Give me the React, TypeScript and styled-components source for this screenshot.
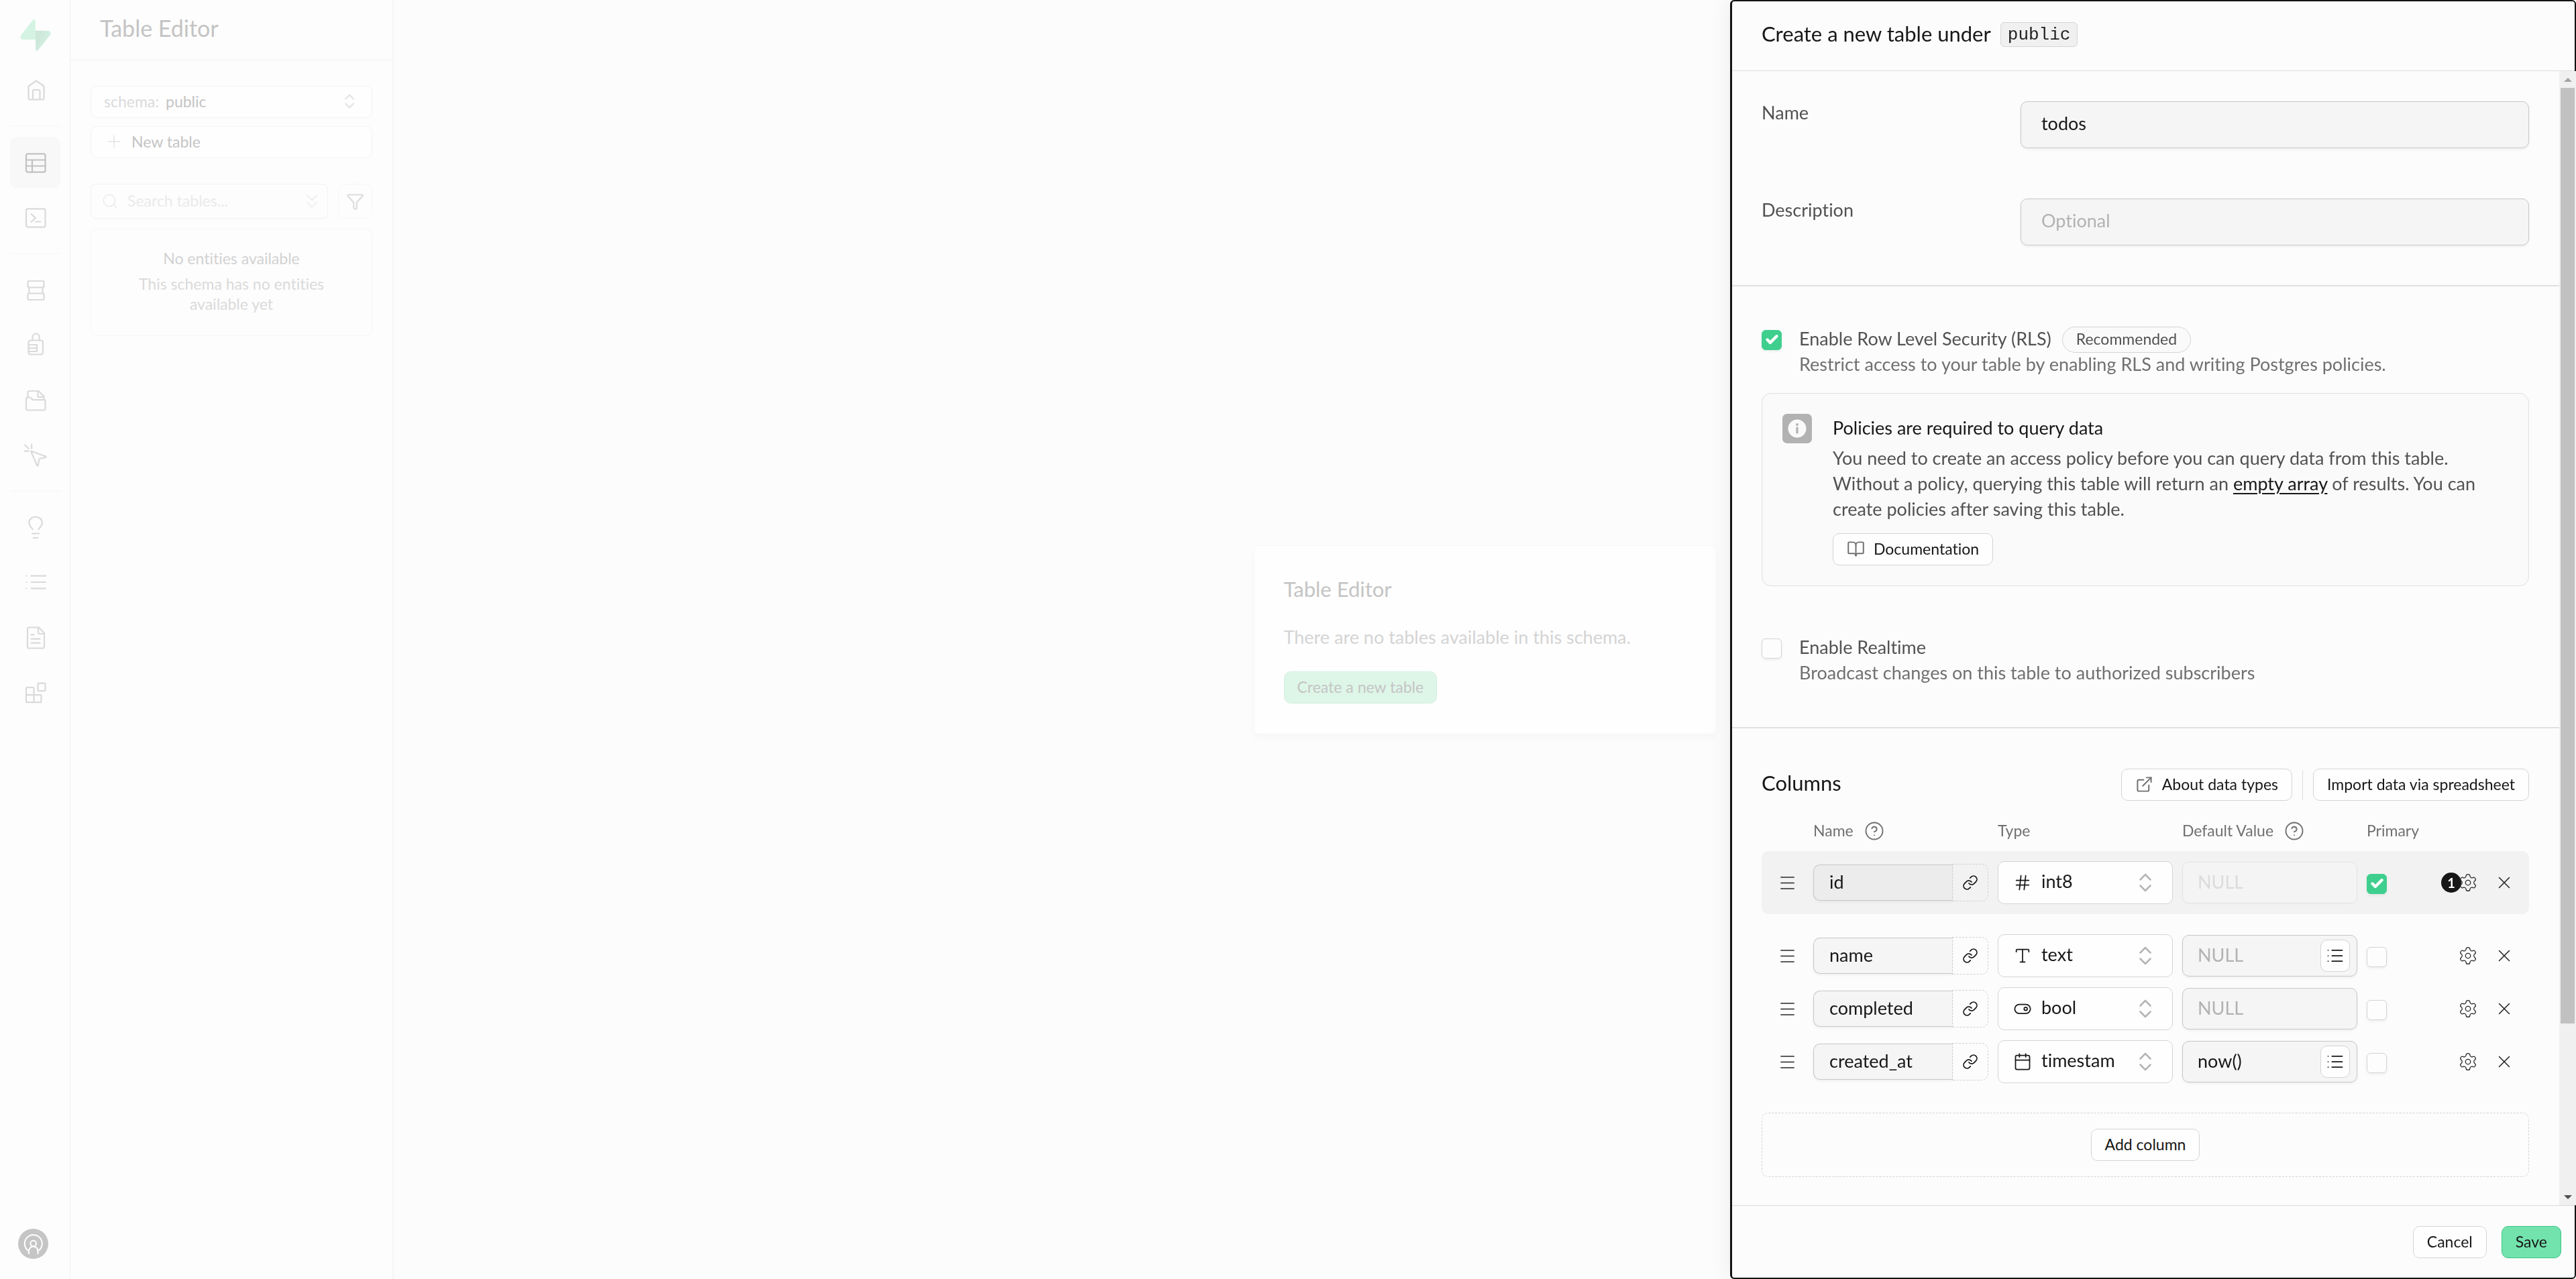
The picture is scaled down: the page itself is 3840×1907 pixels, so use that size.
import React, { useId } from 'react';
import styled, { createGlobalStyle } from 'styled-components';
import {
  BookOpen,
  Calendar,
  Check,
  ChevronsDown,
  ChevronsUpDown,
  CircleHelp,
  ExternalLink,
  Filter,
  Hash,
  Link,
  List,
  Menu,
  Plus,
  Search,
  Settings,
  Type,
  X,
} from 'lucide-react';

const GlobalStyle = createGlobalStyle`
  *, *::before, *::after { box-sizing: border-box; }
  body {
    margin: 0;
    background: #fdfdfd;
    color: #171717;
    font-family: Lato, 'Liberation Sans', sans-serif;
    font-size: 27px;
    line-height: 38px;
    font-variant-ligatures: none;
  }
  button, input, select { font: inherit; font-variant-ligatures: none; color: inherit; margin: 0; }
  h1, h2, h3, p { margin: 0; font-weight: 400; font-size: inherit; }
`;

/* ---------- shell ---------- */

const Shell = styled.div`
  display: flex;
  min-height: 100vh;
  color: #c4c4c4;
`;

const Rail = styled.aside`
  display: flex;
  flex-direction: column;
  flex: none;
  width: 105px;
  padding: 29px 14px 30px 15px;
  border-right: 1px solid #f1f1f1;
`;

const LogoLink = styled.a`
  display: flex;
  justify-content: center;
  margin-bottom: 20px;
`;

const RailNav = styled.nav`
  display: flex;
  flex-direction: column;
  flex: 1;
  gap: 5px;
`;

const RailLink = styled.a<{ $active?: boolean }>`
  display: grid;
  place-items: center;
  height: 77px;
  border-radius: 10px;
  color: ${(p) => (p.$active ? '#c2c2c2' : '#dadada')};
  background: ${(p) => (p.$active ? '#f8f8f8' : 'transparent')};
`;

const RailDivider = styled.hr`
  width: 100%;
  height: 2px;
  margin: 9px 0 10px;
  border: 0;
  background: #f9f9f9;
`;

const AvatarButton = styled.button`
  width: 45px;
  height: 45px;
  margin-left: 12px;
  padding: 0;
  border: 0;
  border-radius: 50%;
  background: #c5c5c5;
  color: #fff;
`;

const Sidebar = styled.section`
  flex: none;
  width: 482px;
  border-right: 2px solid #f5f5f5;
`;

const SidebarHeader = styled.header`
  display: flex;
  align-items: center;
  height: 90px;
  padding: 0 44px 6px;
  border-bottom: 1px solid #f3f3f3;
  font-size: 34px;
`;

const SidebarBody = styled.div`
  display: flex;
  flex-direction: column;
  padding: 38px 30px;
  font-size: 23px;
  line-height: 30px;
`;

const SidebarButton = styled.button`
  display: flex;
  align-items: center;
  height: 48px;
  margin-bottom: 12px;
  padding: 0 19px 2px;
  border: 1px solid #f3f3f3;
  border-radius: 10px;
  background: #fefefe;
  svg { color: #e4e4e4; }
`;

const SchemaLabel = styled.span`
  margin-right: 10px;
  color: #dadada;
`;

const Spread = styled.span`
  flex: 1;
  text-align: left;
`;

const NewTableText = styled.span`
  margin-left: 11px;
`;

const SearchRow = styled.div`
  display: flex;
  gap: 15px;
  margin: 26px 0 15px;
`;

const SearchBox = styled.label`
  display: flex;
  align-items: center;
  flex: 1;
  min-width: 0;
  gap: 13px;
  height: 52px;
  padding: 0 6px 0 15px;
  border: 1px solid #f1f1f1;
  border-radius: 7px;
  color: #e9e9e9;
`;

const SearchInput = styled.input`
  flex: 1;
  min-width: 0;
  padding: 0 0 3px;
  border: 0;
  outline: 0;
  background: transparent;
  &::placeholder { color: #eaeaea; opacity: 1; }
`;

const FilterButton = styled.button`
  display: grid;
  place-items: center;
  width: 51px;
  height: 52px;
  padding: 0;
  border: 1px dashed #f1f1f1;
  border-radius: 10px;
  background: transparent;
  color: #dadada;
`;

const EmptyBox = styled.div`
  display: flex;
  flex-direction: column;
  gap: 8px;
  padding: 28px 60px 32px;
  border: 1px solid #f6f6f6;
  border-radius: 10px;
  text-align: center;
  color: #dadada;
`;

const EmptyTitle = styled.p`
  color: #d2d2d2;
`;

const Main = styled.main`
  display: flex;
  flex: 1;
  align-items: center;
  justify-content: center;
  background: #fcfcfc;
`;

const Card = styled.article`
  display: flex;
  flex-direction: column;
  align-items: flex-start;
  width: 690px;
  padding: 45px 44px;
  border: 1px solid #f7f7f7;
  border-radius: 6px;
  background: #fefefe;
  box-shadow: 0 6px 12px rgba(0, 0, 0, 0.025);
`;

const CardTitle = styled.h2`
  margin-bottom: 34px;
  font-size: 31px;
`;

const CardText = styled.p`
  margin-bottom: 32px;
  color: #d4d4d4;
`;

const CardButton = styled.button`
  height: 48px;
  padding: 0 19px 2px;
  border: 1px solid #d3efe0;
  border-radius: 10px;
  background: #def6e8;
  font-size: 23px;
`;

/* ---------- drawer ---------- */

const Drawer = styled.form`
  position: fixed;
  inset: 0 0 0 auto;
  display: flex;
  flex-direction: column;
  width: 100%;
  max-width: 1261px;
  border: 2px solid #131313;
  border-left-width: 3px;
  border-radius: 6px;
  background: #fcfcfc;
  box-shadow: 0 0 36px rgba(0, 0, 0, 0.07);
  color: #525252;
`;

const DrawerHeader = styled.header`
  display: flex;
  align-items: center;
  flex: none;
  gap: 14px;
  height: 104px;
  padding: 0 44px 4px;
  border-bottom: 1px solid #dfdfdf;
`;

const DrawerTitle = styled.h1`
  padding-bottom: 3px;
  font-size: 31px;
  color: #171717;
`;

const SchemaCode = styled.code`
  height: 37px;
  padding: 0 10px;
  border: 1px solid #d6d6d6;
  border-radius: 6px;
  background: #f0f0f0;
  font: 26px/36px 'Liberation Mono', monospace;
  color: #222;
`;

const DrawerBody = styled.div`
  display: flex;
  flex: 1;
  min-height: 0;
  margin-right: -2px;
`;

const ScrollArea = styled.div`
  flex: 1;
  min-width: 0;
  overflow-y: auto;
  scrollbar-width: none;
`;

const ScrollTrack = styled.div`
  display: flex;
  flex-direction: column;
  align-items: center;
  flex: none;
  width: 25px;
  background: #f0f0f0;
`;

const ScrollArrow = styled.span<{ $down?: boolean }>`
  display: grid;
  place-items: center;
  flex: none;
  width: 25px;
  height: 25px;
  &::before {
    content: '';
    border: 6px solid transparent;
    border-top-width: ${(p) => (p.$down ? '6px' : '0')};
    border-bottom-width: ${(p) => (p.$down ? '0' : '6px')};
    border-top-color: #505050;
    border-bottom-color: #a3a3a3;
  }
`;

const ScrollRun = styled.div`
  flex: 1;
  width: 21px;
`;

const ScrollThumb = styled.div`
  height: 85%;
  background: #c1c1c1;
`;

const Section = styled.section<{ $ruled?: boolean }>`
  display: flex;
  flex-direction: column;
  padding: 60px 45px 64px 44px;
  border-bottom: ${(p) => (p.$ruled ? '2px solid #e0e0e0' : '0')};
`;

const FieldSection = styled(Section)`
  gap: 75px;
  padding-top: 45px;
  padding-bottom: 59px;
`;

const Field = styled.div`
  display: grid;
  grid-template-columns: 386px minmax(0, 1fr);
`;

const FieldLabel = styled.label`
  line-height: 34px;
`;

const TextInput = styled.input`
  width: 100%;
  height: 70px;
  padding: 0 30px 5px;
  border: 1px solid #c7c7c7;
  border-radius: 10px;
  outline: 0;
  background: #f5f5f5;
  box-shadow: 0 2px 4px rgba(0, 0, 0, 0.05);
  color: #171717;
  &::placeholder { color: #b2b2b2; opacity: 1; }
`;

const OptionRow = styled.div`
  display: grid;
  grid-template-columns: 30px minmax(0, 1fr);
  column-gap: 26px;
`;

const OptionHead = styled.div`
  display: flex;
  align-items: center;
  gap: 16px;
  height: 39px;
`;

const OptionLabel = styled.label`
  padding-bottom: 3px;
`;

const OptionText = styled.p`
  grid-column: 2;
  line-height: 34px;
  color: #707070;
`;

const Badge = styled.span`
  height: 39px;
  padding: 0 20px;
  border: 1px solid #d4d4d4;
  border-radius: 20px;
  background: #fafafa;
  font-size: 23px;
  line-height: 35px;
`;

const CheckWrap = styled.span`
  display: grid;
  place-items: center;
  align-self: center;
  width: 30px;
  height: 30px;
  svg {
    grid-area: 1 / 1;
    color: #fff;
    pointer-events: none;
  }
`;

const CheckInput = styled.input`
  grid-area: 1 / 1;
  appearance: none;
  width: 30px;
  height: 30px;
  border: 1px solid #d4d4d4;
  border-radius: 6px;
  background: #fdfdfd;
  box-shadow: 0 2px 4px rgba(0, 0, 0, 0.06);
  &:checked {
    border-color: #3ecf8e;
    background: #3ecf8e;
  }
`;

const Alert = styled.div`
  display: grid;
  grid-template-columns: 44px minmax(0, 1fr);
  column-gap: 31px;
  margin: 26px 0 73px;
  padding: 30px;
  border: 1px solid #dfdfdf;
  border-radius: 14px;
  background: #fafafa;
`;

const AlertIcon = styled.span`
  display: grid;
  place-items: center;
  width: 44px;
  height: 44px;
  border-radius: 7px;
  background: #b2b2b2;
`;

const AlertTitle = styled.h3`
  margin: 2px 0 7px;
  color: #171717;
`;

const AlertText = styled.p`
  margin-bottom: 17px;
`;

const TextLink = styled.a`
  color: #171717;
  text-underline-offset: 4px;
`;

const Button = styled.button<{ $primary?: boolean }>`
  display: flex;
  align-items: center;
  gap: 13px;
  height: 48px;
  padding: 0 20px 2px;
  border: 1px solid ${(p) => (p.$primary ? '#3fc586' : '#d4d4d4')};
  border-radius: 10px;
  background: ${(p) => (p.$primary ? '#72e3ad' : '#fefefe')};
  font-size: 23px;
  color: #171717;
  svg { color: #707070; }
`;

const ColumnsHead = styled.div`
  display: flex;
  align-items: center;
  gap: 15px;
  margin-bottom: 25px;
`;

const ColumnsTitle = styled.h2`
  flex: 1;
  padding-bottom: 6px;
  font-size: 31px;
  color: #171717;
`;

const HeadDivider = styled.span`
  width: 1px;
  height: 45px;
  background: #dfdfdf;
`;

const ColumnTable = styled.table`
  display: block;
  margin-bottom: 44px;
`;

const TableHead = styled.thead`
  display: block;
  margin-bottom: 10px;
`;

const TableBody = styled.tbody`
  display: flex;
  flex-direction: column;
  gap: 15px;
`;

const TableRow = styled.tr<{ $primary?: boolean }>`
  display: grid;
  grid-template-columns: 63px repeat(3, minmax(0, 1fr)) 112px 116px;
  column-gap: 14px;
  align-items: center;
  margin-bottom: ${(p) => (p.$primary ? '15px' : '0')};
  padding: ${(p) => (p.$primary ? '15px 0' : '0')};
  border-radius: 10px;
  background: ${(p) => (p.$primary ? '#f2f2f2' : 'transparent')};
`;

const HeadCell = styled.th`
  display: flex;
  align-items: center;
  gap: 16px;
  height: 40px;
  padding: 0;
  font-size: 23px;
  font-weight: 400;
  color: #707070;
`;

const HeadText = styled.span`
  padding-bottom: 3px;
`;

const Cell = styled.td`
  display: flex;
  align-items: center;
  min-width: 0;
  padding: 0;
`;

const PrimaryCell = styled(Cell)`
  padding-top: 3px;
`;

const ActionsCell = styled(Cell)`
  justify-content: flex-end;
  gap: 28px;
  padding-right: 26px;
`;

const IconButton = styled.button`
  position: relative;
  display: grid;
  place-items: center;
  width: 26px;
  height: 30px;
  padding: 0;
  border: 0;
  background: transparent;
  color: #262626;
  svg { position: relative; }
`;

const DragHandle = styled(IconButton)`
  margin-left: 24px;
`;

const CountBadge = styled.span`
  position: absolute;
  left: -25px;
  top: 0;
  width: 30px;
  height: 30px;
  border-radius: 50%;
  background: #171717;
  font-size: 20px;
  font-weight: 700;
  line-height: 30px;
  color: #fff;
`;

const ColumnNameInput = styled.input<{ $tint?: boolean }>`
  flex: 1;
  min-width: 0;
  height: 54px;
  padding: 0 10px 4px 23px;
  border: 1px solid #c7c7c7;
  border-right: 0;
  border-radius: 10px 0 0 10px;
  outline: 0;
  background: ${(p) => (p.$tint ? '#ececec' : '#f5f5f5')};
  box-shadow: 0 2px 4px rgba(0, 0, 0, 0.05);
  color: #171717;
`;

const LinkButton = styled.button`
  display: grid;
  place-items: center;
  flex: none;
  width: 54px;
  height: 56px;
  padding: 0;
  border: 1px dashed #cfcfcf;
  border-radius: 0 10px 10px 0;
  background: transparent;
  color: #171717;
`;

const TypeBox = styled.span`
  display: grid;
  grid-template-columns: 28px minmax(0, 1fr) 36px;
  align-items: center;
  width: 100%;
  height: 64px;
  padding: 0 22px;
  border: 1px solid #d4d4d4;
  border-radius: 10px;
  background: #fefefe;
  color: #171717;
  svg { grid-area: 1 / 1; pointer-events: none; }
  svg:last-child { grid-area: 1 / 3; color: #b5b5b5; }
`;

const TypeSelect = styled.select`
  grid-area: 1 / 1 / 2 / -1;
  appearance: none;
  height: 62px;
  padding: 0 30px 4px 42px;
  border: 0;
  outline: 0;
  background: transparent;
`;

const DefaultBox = styled.span<{ $disabled?: boolean }>`
  display: flex;
  align-items: center;
  width: 100%;
  height: 62px;
  padding: 0 10px 0 0;
  border: 1px solid #c7c7c7;
  border-radius: 10px;
  background: ${(p) => (p.$disabled ? '#fafafa' : '#f5f5f5')};
  box-shadow: 0 2px 4px rgba(0, 0, 0, 0.05);
  opacity: ${(p) => (p.$disabled ? 0.35 : 1)};
`;

const DefaultInput = styled.input`
  flex: 1;
  min-width: 0;
  height: 60px;
  padding: 0 0 4px 22px;
  border: 0;
  outline: 0;
  background: transparent;
  color: #171717;
  &::placeholder { color: #b2b2b2; opacity: 1; }
`;

const ListButton = styled.button`
  display: grid;
  place-items: center;
  width: 44px;
  height: 48px;
  padding: 0;
  border: 1px solid #d4d4d4;
  border-radius: 10px;
  background: #fefefe;
  color: #171717;
`;

const AddBox = styled.div`
  display: grid;
  place-items: center;
  height: 96px;
  border: 1px dashed #d4d4d4;
  border-radius: 10px;
`;

const DrawerFooter = styled.footer`
  display: flex;
  align-items: center;
  justify-content: flex-end;
  flex: none;
  gap: 22px;
  height: 108px;
  padding: 0 20px;
  border-top: 1px solid #dadada;
`;

/* ---------- drawings ---------- */

const RailIcon = ({ children }: { children: React.ReactNode }) => (
  <svg width="40" height="40" viewBox="0 0 40 40" fill="none" stroke="currentColor" strokeWidth="2.2" strokeLinecap="round" strokeLinejoin="round" aria-hidden="true">
    {children}
  </svg>
);

const HomeIcon = () => (
  <RailIcon>
    <path d="M21 5.5 32.5 13.5V31.5a2 2 0 0 1-2 2H11.5a2 2 0 0 1-2-2V13.5Z" />
    <path d="M16 33V20.5a1.5 1.5 0 0 1 1.5-1.5h7.5a1.5 1.5 0 0 1 1.5 1.5V33" />
  </RailIcon>
);
const TableIcon = () => (
  <RailIcon>
    <rect x="6" y="6.4" width="28.5" height="27.2" rx="2.5" />
    <path d="M6 15.5h28.5M6 24.5h28.5M15 15.5v18" />
  </RailIcon>
);
const SqlIcon = () => (
  <RailIcon>
    <rect x="6" y="6.4" width="28.5" height="27.2" rx="2.5" />
    <path d="m13.5 14 6.5 6-6.5 6M20.5 25.5h7" />
  </RailIcon>
);
const DatabaseIcon = () => (
  <RailIcon>
    <rect x="8.5" y="6" width="24" height="9.5" rx="1.5" />
    <path d="M10.5 15.5v9M30.5 15.5v9" />
    <rect x="8.5" y="24.5" width="24" height="9.5" rx="1.5" />
  </RailIcon>
);
const AuthIcon = () => (
  <RailIcon>
    <rect x="9.5" y="12.5" width="21.5" height="21" rx="3" />
    <path d="M15.5 12.5V7.5a5 5 0 0 1 10 0v5M9.5 19H22v10H9.5M9.5 24H22" />
  </RailIcon>
);
const StorageIcon = () => (
  <RailIcon>
    <path d="M6 17.5a2 2 0 0 1 2-2h3.5c2 0 3 3.7 5.5 3.7h15.5a2 2 0 0 1 2 2v11.3a2 2 0 0 1-2 2H8a2 2 0 0 1-2-2Z" />
    <path d="M8.5 15.5V8a2 2 0 0 1 2-2h14l8 8v5M23.5 6v7.5a1.5 1.5 0 0 0 1.5 1.5h7" />
  </RailIcon>
);
const FunctionsIcon = () => (
  <RailIcon>
    <path d="m4 4.5 5.6 5.2M14.2 3.6v6M3.6 13.6h6M13 13.5l22 8c1 .4 1 1.2 0 1.5l-9.5 2.3-1.8 9.5c-.2.9-1.2.9-1.5.1Z" />
  </RailIcon>
);
const AdvisorsIcon = () => (
  <RailIcon>
    <path d="M15.7 22.4c-1.2-2.6-5.3-5.2-5.3-10a9.7 8.9 0 0 1 19.4 0c0 4.8-4.1 7.4-5.3 10M15 28.5h10.5M16.5 35h7" />
  </RailIcon>
);
const LogsIcon = () => (
  <RailIcon>
    <path d="M13.5 9.7h21.5M13.5 19h21.5M13.5 28.3h21.5M6.2 9.7h.1M6.2 19h.1M6.2 28.3h.1" />
  </RailIcon>
);
const DocsIcon = () => (
  <RailIcon>
    <path d="M25 4.5H10a2 2 0 0 0-2 2v27a2 2 0 0 0 2 2h21a2 2 0 0 0 2-2V13ZM24 5v7a2 2 0 0 0 2 2h7M13.5 15.3h4M13.5 21.6h13M13.5 27.7h13" />
  </RailIcon>
);
const IntegrationsIcon = () => (
  <RailIcon>
    <rect x="23.5" y="5.7" width="11" height="11.4" rx="1.5" />
    <path d="M17.5 34V13.5A1.5 1.5 0 0 0 16 12H7.5A1.5 1.5 0 0 0 6 13.5V32.7a1.5 1.5 0 0 0 1.5 1.5H27a1.5 1.5 0 0 0 1.5-1.5v-8a1.5 1.5 0 0 0-1.5-1.5H6" />
  </RailIcon>
);

const Logo = () => (
  <svg width="46" height="47" viewBox="0 0 109 113" aria-hidden="true">
    <defs>
      <linearGradient id="bolt" x1="53.974" y1="54.974" x2="94.163" y2="71.829" gradientUnits="userSpaceOnUse">
        <stop stopColor="#cbe5d8" />
        <stop offset="1" stopColor="#d2efe1" />
      </linearGradient>
    </defs>
    <path fill="url(#bolt)" d="M63.7076 110.284C60.8481 113.885 55.0502 111.912 54.9813 107.314L53.9738 40.0627L99.1935 40.0627C107.384 40.0627 111.952 49.5228 106.859 55.9374L63.7076 110.284Z" />
    <path fill="#d4f3e3" d="M45.317 2.07103C48.1765 -1.53037 53.9745 0.442937 54.0434 5.041L54.4849 72.2922H9.83113C1.64038 72.2922 -2.92775 62.8321 2.1655 56.4175L45.317 2.07103Z" />
  </svg>
);

const AvatarIcon = () => (
  <svg width="45" height="45" viewBox="0 0 45 45" fill="none" stroke="currentColor" strokeWidth="2" aria-hidden="true">
    <path d="M15.5 33a13 13 0 1 1 14.5 0" />
    <circle cx="22.7" cy="22" r="4.3" />
    <path d="M16 38v-4.5a6.7 7 0 0 1 13.5 0V38" />
  </svg>
);

const InfoIcon = () => (
  <svg width="28" height="28" viewBox="0 0 28 28" aria-hidden="true">
    <circle cx="14" cy="14" r="13.5" fill="#fafafa" />
    <circle cx="14" cy="8" r="1.9" fill="#b2b2b2" />
    <rect x="12.4" y="11.5" width="3.2" height="10" rx="1.2" fill="#b2b2b2" />
  </svg>
);

interface GlyphProps {
  size?: number;
  strokeWidth?: number;
}

const BoolIcon = ({ size = 24, strokeWidth = 2 }: GlyphProps) => (
  <svg width={size} height={size} viewBox="0 0 24 24" fill="none" stroke="currentColor" strokeWidth={strokeWidth} aria-hidden="true">
    <rect x="2" y="6.5" width="20" height="11.5" rx="5.75" />
    <circle cx="16" cy="12.25" r="2" />
  </svg>
);

/* ---------- parts ---------- */

const Checkbox = ({ id, checked, label }: { id?: string; checked?: boolean; label?: string }) => (
  <CheckWrap>
    <CheckInput id={id} type="checkbox" defaultChecked={checked} aria-label={label} />
    {checked && <Check size={21} strokeWidth={5} />}
  </CheckWrap>
);

interface Column {
  name: string;
  type: string;
  icon: React.ComponentType<GlyphProps>;
  value?: string;
  picker?: boolean;
  primary?: boolean;
}

const COLUMNS: Column[] = [
  { name: 'id', type: 'int8', icon: Hash, primary: true },
  { name: 'name', type: 'text', icon: Type, picker: true },
  { name: 'completed', type: 'bool', icon: BoolIcon },
  { name: 'created_at', type: 'timestam', icon: Calendar, value: 'now()', picker: true },
];

const ColumnRow = ({ column }: { column: Column }) => {
  const { name, type, icon: Icon, value, picker, primary } = column;
  return (
    <TableRow $primary={primary}>
      <Cell>
        <DragHandle type="button" aria-label={`Move ${name}`}><Menu size={29} strokeWidth={1.25} /></DragHandle>
      </Cell>
      <Cell>
        <ColumnNameInput $tint={primary} defaultValue={name} aria-label="Column name" />
        <LinkButton type="button" aria-label="Add foreign key"><Link size={24} strokeWidth={1.75} /></LinkButton>
      </Cell>
      <Cell>
        <TypeBox>
          <Icon size={28} strokeWidth={1.5} />
          <TypeSelect aria-label={`Type of ${name}`} defaultValue={type}>
            {COLUMNS.map((c) => <option key={c.type}>{c.type}</option>)}
          </TypeSelect>
          <ChevronsUpDown size={36} strokeWidth={1.75} />
        </TypeBox>
      </Cell>
      <Cell>
        <DefaultBox $disabled={primary}>
          <DefaultInput placeholder="NULL" defaultValue={value} disabled={primary} aria-label={`Default value of ${name}`} />
          {picker && <ListButton type="button" aria-label="Suggestions"><List size={28} strokeWidth={1.5} /></ListButton>}
        </DefaultBox>
      </Cell>
      <PrimaryCell><Checkbox checked={primary} label={`${name} is primary`} /></PrimaryCell>
      <ActionsCell>
        <IconButton type="button" aria-label={`Settings of ${name}`}>
          {primary && <CountBadge>1</CountBadge>}
          <Settings size={30} strokeWidth={1} />
        </IconButton>
        <IconButton type="button" aria-label={`Remove ${name}`}><X size={30} strokeWidth={1.25} /></IconButton>
      </ActionsCell>
    </TableRow>
  );
};

const NAV: { label: string; icon: React.FC; active?: boolean }[][] = [
  [{ label: 'Home', icon: HomeIcon }],
  [{ label: 'Table Editor', icon: TableIcon, active: true }, { label: 'SQL Editor', icon: SqlIcon }],
  [
    { label: 'Database', icon: DatabaseIcon },
    { label: 'Authentication', icon: AuthIcon },
    { label: 'Storage', icon: StorageIcon },
    { label: 'Edge Functions', icon: FunctionsIcon },
  ],
  [
    { label: 'Advisors', icon: AdvisorsIcon },
    { label: 'Logs', icon: LogsIcon },
    { label: 'API Docs', icon: DocsIcon },
    { label: 'Integrations', icon: IntegrationsIcon },
  ],
];

export default function App() {
  const id = useId();
  return (
    <>
      <GlobalStyle />
      <Shell>
        <Rail>
          <LogoLink href="#" aria-label="Projects"><Logo /></LogoLink>
          <RailNav>
            {NAV.map((group, i) => (
              <React.Fragment key={i}>
                {i > 0 && <RailDivider />}
                {group.map(({ label, icon: Icon, active }) => (
                  <RailLink key={label} href="#" aria-label={label} $active={active}><Icon /></RailLink>
                ))}
              </React.Fragment>
            ))}
          </RailNav>
          <AvatarButton aria-label="Account"><AvatarIcon /></AvatarButton>
        </Rail>
        <Sidebar>
          <SidebarHeader>Table Editor</SidebarHeader>
          <SidebarBody>
            <SidebarButton>
              <SchemaLabel>schema:</SchemaLabel>
              <Spread>public</Spread>
              <ChevronsUpDown size={28} strokeWidth={2} />
            </SidebarButton>
            <SidebarButton>
              <Plus size={30} strokeWidth={1.25} />
              <NewTableText>New table</NewTableText>
            </SidebarButton>
            <SearchRow>
              <SearchBox>
                <Search size={26} strokeWidth={1.25} />
                <SearchInput placeholder="Search tables..." aria-label="Search tables" />
                <ChevronsDown size={34} strokeWidth={1} />
              </SearchBox>
              <FilterButton aria-label="Filter"><Filter size={27} strokeWidth={1.75} /></FilterButton>
            </SearchRow>
            <EmptyBox>
              <EmptyTitle>No entities available</EmptyTitle>
              <p>This schema has no entities available yet</p>
            </EmptyBox>
          </SidebarBody>
        </Sidebar>
        <Main>
          <Card>
            <CardTitle>Table Editor</CardTitle>
            <CardText>There are no tables available in this schema.</CardText>
            <CardButton>Create a new table</CardButton>
          </Card>
        </Main>
      </Shell>

      <Drawer onSubmit={(e) => e.preventDefault()}>
        <DrawerHeader>
          <DrawerTitle>Create a new table under</DrawerTitle>
          <SchemaCode>public</SchemaCode>
        </DrawerHeader>
        <DrawerBody>
          <ScrollArea>
            <FieldSection $ruled>
              <Field>
                <FieldLabel htmlFor={`${id}-name`}>Name</FieldLabel>
                <TextInput id={`${id}-name`} defaultValue="todos" />
              </Field>
              <Field>
                <FieldLabel htmlFor={`${id}-desc`}>Description</FieldLabel>
                <TextInput id={`${id}-desc`} placeholder="Optional" />
              </Field>
            </FieldSection>

            <Section $ruled>
              <OptionRow>
                <Checkbox id={`${id}-rls`} checked />
                <OptionHead>
                  <OptionLabel htmlFor={`${id}-rls`}>Enable Row Level Security (RLS)</OptionLabel>
                  <Badge>Recommended</Badge>
                </OptionHead>
                <OptionText>Restrict access to your table by enabling RLS and writing Postgres policies.</OptionText>
              </OptionRow>
              <Alert>
                <AlertIcon><InfoIcon /></AlertIcon>
                <div>
                  <AlertTitle>Policies are required to query data</AlertTitle>
                  <AlertText>
                    You need to create an access policy before you can query data from this table. Without a
                    policy, querying this table will return an <TextLink href="#">empty array</TextLink> of
                    results. You can create policies after saving this table.
                  </AlertText>
                  <Button type="button"><BookOpen size={27} strokeWidth={1.75} />Documentation</Button>
                </div>
              </Alert>
              <OptionRow>
                <Checkbox id={`${id}-realtime`} />
                <OptionHead>
                  <OptionLabel htmlFor={`${id}-realtime`}>Enable Realtime</OptionLabel>
                </OptionHead>
                <OptionText>Broadcast changes on this table to authorized subscribers</OptionText>
              </OptionRow>
            </Section>

            <Section>
              <ColumnsHead>
                <ColumnsTitle>Columns</ColumnsTitle>
                <Button type="button"><ExternalLink size={27} strokeWidth={1.75} />About data types</Button>
                <HeadDivider />
                <Button type="button">Import data via spreadsheet</Button>
              </ColumnsHead>
              <ColumnTable>
                <TableHead>
                  <TableRow>
                    <HeadCell />
                    <HeadCell><HeadText>Name</HeadText><CircleHelp size={30} strokeWidth={1.5} /></HeadCell>
                    <HeadCell><HeadText>Type</HeadText></HeadCell>
                    <HeadCell><HeadText>Default Value</HeadText><CircleHelp size={30} strokeWidth={1.5} /></HeadCell>
                    <HeadCell><HeadText>Primary</HeadText></HeadCell>
                    <HeadCell />
                  </TableRow>
                </TableHead>
                <TableBody>
                  {COLUMNS.map((c) => <ColumnRow key={c.name} column={c} />)}
                </TableBody>
              </ColumnTable>
              <AddBox><Button type="button">Add column</Button></AddBox>
            </Section>
          </ScrollArea>
          <ScrollTrack aria-hidden="true">
            <ScrollArrow />
            <ScrollRun><ScrollThumb /></ScrollRun>
            <ScrollArrow $down />
          </ScrollTrack>
        </DrawerBody>
        <DrawerFooter>
          <Button type="button">Cancel</Button>
          <Button type="submit" $primary>Save</Button>
        </DrawerFooter>
      </Drawer>
    </>
  );
}
